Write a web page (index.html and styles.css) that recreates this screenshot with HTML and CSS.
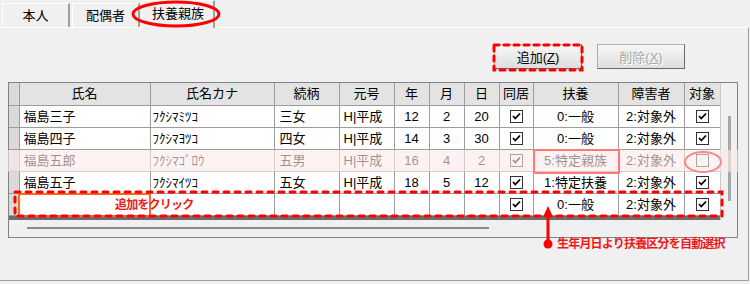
FILE: index.html
```html
<!DOCTYPE html>
<html lang="ja">
<head>
  <meta charset="UTF-8" />
  <title>扶養親族</title>
  <link rel="stylesheet" href="styles.css">
</head>
<body>
  <div class="screen">
    <div class="tabs">
      <div class="tab">本人</div>
      <div class="tab">配偶者</div>
      <div class="tab active">扶養親族</div>
    </div>

    <div class="panel">
      <div class="toolbar">
        <button class="btn">追加(<u>Z</u>)</button>
        <button class="btn" disabled>削除(<u>X</u>)</button>
      </div>

      <div class="grid">
        <div class="grid-main">
          <div class="sheet-wrap">
            <table class="sheet">
              <colgroup>
                <col style="width:10px"><col style="width:131px"><col style="width:124px">
                <col style="width:65px"><col style="width:55px"><col style="width:35px">
                <col style="width:35px"><col style="width:35px"><col style="width:34px">
                <col style="width:85px"><col style="width:66px"><col style="width:36px">
              </colgroup>
              <thead>
                <tr>
                  <th class="rh"></th><th>氏名</th><th>氏名カナ</th><th>続柄</th><th>元号</th>
                  <th>年</th><th>月</th><th>日</th><th>同居</th><th>扶養</th><th>障害者</th><th>対象</th>
                </tr>
              </thead>
              <tbody>
                <tr>
                  <td class="rh"></td><td class="name">福島三子</td><td class="kana">ﾌｸｼﾏﾐﾂｺ</td>
                  <td class="rel">三女</td><td class="era">H|平成</td><td>12</td><td>2</td><td>20</td>
                  <td><span class="chk on"></span></td><td>0:一般</td><td>2:対象外</td><td><span class="chk on"></span></td>
                </tr>
                <tr>
                  <td class="rh"></td><td class="name">福島四子</td><td class="kana">ﾌｸｼﾏﾖﾂｺ</td>
                  <td class="rel">四女</td><td class="era">H|平成</td><td>14</td><td>3</td><td>30</td>
                  <td><span class="chk on"></span></td><td>0:一般</td><td>2:対象外</td><td><span class="chk on"></span></td>
                </tr>
                <tr>
                  <td class="rh"></td><td class="name">福島五郎</td><td class="kana">ﾌｸｼﾏｺﾞﾛｳ</td>
                  <td class="rel">五男</td><td class="era">H|平成</td><td>16</td><td>4</td><td>2</td>
                  <td><span class="chk on"></span></td><td>5:特定親族</td><td>2:対象外</td><td><span class="chk"></span></td>
                </tr>
                <tr>
                  <td class="rh"></td><td class="name">福島五子</td><td class="kana">ﾌｸｼﾏｲﾂｺ</td>
                  <td class="rel">五女</td><td class="era">H|平成</td><td>18</td><td>5</td><td>12</td>
                  <td><span class="chk on"></span></td><td>1:特定扶養</td><td>2:対象外</td><td><span class="chk on"></span></td>
                </tr>
                <tr>
                  <td class="rh"></td><td></td><td></td><td></td><td></td><td></td><td></td><td></td>
                  <td><span class="chk on"></span></td><td>0:一般</td><td>2:対象外</td><td><span class="chk on"></span></td>
                </tr>
              </tbody>
            </table>
            <div class="endbar"></div>
          </div>
          <div class="vscroll"><div class="vthumb"></div></div>
        </div>
        <div class="hscroll"><div class="hthumb"></div></div>
      </div>
    </div>

    <!-- annotations drawn over the screen -->
    <div class="fade-row"></div>
    <svg class="marks" width="750" height="284" viewBox="0 0 750 284">
      <ellipse cx="176" cy="14" rx="43" ry="12" fill="none" stroke="#f00" stroke-width="3"/>
      <rect x="494" y="45" width="88" height="25" fill="none" stroke="#f00" stroke-width="3"
            stroke-dasharray="5 5" stroke-linecap="round"/>
      <rect x="534" y="150" width="85" height="23" fill="none" stroke="#f77" stroke-width="2"/>
      <ellipse cx="703" cy="162" rx="18" ry="10" fill="none" stroke="#f58a8a" stroke-width="2"/>
      <rect x="19" y="194" width="131" height="22" fill="none" stroke="#ff6a1a" stroke-width="2"/>
      <rect x="15" y="192" width="707" height="24" fill="none" stroke="#f00" stroke-width="3"
            stroke-dasharray="5 6" stroke-linecap="round"/>
      <path d="M548 216 V244" stroke="#f00" stroke-width="3"/>
      <path d="M548 206 L553 217 L543 217 Z" fill="#f00"/>
      <circle cx="548" cy="244" r="4.5" fill="#f00"/>
    </svg>
    <div class="note note-add">追加をクリック</div>
    <div class="note note-auto">生年月日より扶養区分を自動選択</div>
  </div>
</body>
</html>
```

FILE: styles.css
```css
body {
  margin: 0;
  background-color: #f0f0f0;
  font-family: "Liberation Sans", "Noto Sans CJK JP", sans-serif;
  font-size: 13px;
  color: #000;
}

.screen {
  position: relative;
  width: 750px;
  height: 284px;
  overflow: hidden;
}

/* tabs */
.tabs {
  display: flex;
  align-items: flex-end;
  height: 28px;
  padding-left: 2px;
  gap: 2px;
}

.tab {
  width: 65px;
  height: 23px;
  line-height: 23px;
  text-align: center;
  background-color: #f0f0f0;
  border-top: 1px solid #fff;
  border-left: 1px solid #fff;
  border-right: 2px solid #a0a0a0;
  margin-bottom: 1px;
}

.tab.active {
  width: 70px;
  height: 27px;
  line-height: 26px;
  margin-bottom: 0;
}

.panel {
  width: 749px;
  height: 254px;
  border-top: 1px solid #fff;
  border-right: 1px solid #a0a0a0;
  border-bottom: 1px solid #a0a0a0;
  box-sizing: border-box;
  margin-top: -1px;
}

/* buttons */
.toolbar {
  display: flex;
  justify-content: flex-end;
  gap: 15px;
  padding: 16px 63px 0 0;
}

.btn {
  width: 88px;
  height: 25px;
  padding: 0;
  font-family: inherit;
  font-size: 13px;
  color: #000;
  background: linear-gradient(#f7f7f7, #dedede);
  border: 1px solid #adadad;
  border-right-color: #6a6a6a;
  border-bottom-color: #6a6a6a;
}

.btn[disabled] {
  color: #a8a8a8;
  text-shadow: 1px 1px 0 #fff;
}

/* grid */
.grid {
  width: 730px;
  margin: 13px 0 0 8px;
  border: 1px solid #828282;
  box-sizing: border-box;
}

.grid-main {
  display: flex;
}

.sheet-wrap {
  width: 711px;
}

.sheet {
  width: 711px;
  table-layout: fixed;
  border-collapse: collapse;
  background-color: #fff;
}

.sheet th,
.sheet td {
  border: 1px solid #9c9c9c;
  padding: 0 3px;
  height: 21px;
  white-space: nowrap;
  overflow: hidden;
  text-align: center;
  font-weight: normal;
  line-height: 18px;
}

.sheet tr:first-child th,
.sheet tr:first-child td {
  border-top: none;
}

.sheet th {
  height: 22px;
  background-color: #e3e3e3;
}

.sheet .rh {
  background-color: #dadada;
  border-left: none;
  padding: 0;
}

.sheet td.name {
  text-align: left;
  padding-left: 4px;
}

.sheet td.kana {
  text-align: left;
  padding-left: 2px;
}

.sheet td.rel {
  text-align: left;
  padding-left: 5px;
}

.sheet td.era {
  text-align: left;
  padding-left: 4px;
}

.chk {
  display: inline-block;
  width: 11px;
  height: 11px;
  border: 1px solid #333;
  background-color: #fff;
  vertical-align: middle;
  position: relative;
  top: -1px;
}

.chk.on {
  background-image: url("data:image/svg+xml,%3Csvg xmlns='http://www.w3.org/2000/svg' width='11' height='11'%3E%3Cpath d='M2 5l2.3 2.5L9 2.5' fill='none' stroke='%23000' stroke-width='1.8'/%3E%3C/svg%3E");
}

.endbar {
  height: 4px;
  background-color: #6d6d6d;
}

.vscroll {
  flex: 1;
  padding-top: 33px;
  border-left: 1px solid #c8c8c8;
}

.vthumb {
  width: 3px;
  height: 85px;
  margin-left: 7px;
  background-color: #a8a8a8;
}

.hscroll {
  height: 17px;
  padding-top: 7px;
  box-sizing: border-box;
}

.hthumb {
  width: 462px;
  height: 2px;
  margin-left: 18px;
  background-color: #8a8a8a;
}

/* annotations */
.fade-row {
  position: absolute;
  left: 8px;
  top: 150px;
  width: 730px;
  height: 22px;
  background-color: rgba(252, 234, 234, 0.62);
}

.marks {
  position: absolute;
  left: 0;
  top: 0;
  pointer-events: none;
}

.note {
  position: absolute;
  color: #f01818;
  font-size: 12px;
  font-weight: bold;
  letter-spacing: -0.8px;
  line-height: 14px;
}

.note-add {
  left: 115px;
  top: 198px;
}

.note-auto {
  left: 557px;
  top: 237px;
}
```
